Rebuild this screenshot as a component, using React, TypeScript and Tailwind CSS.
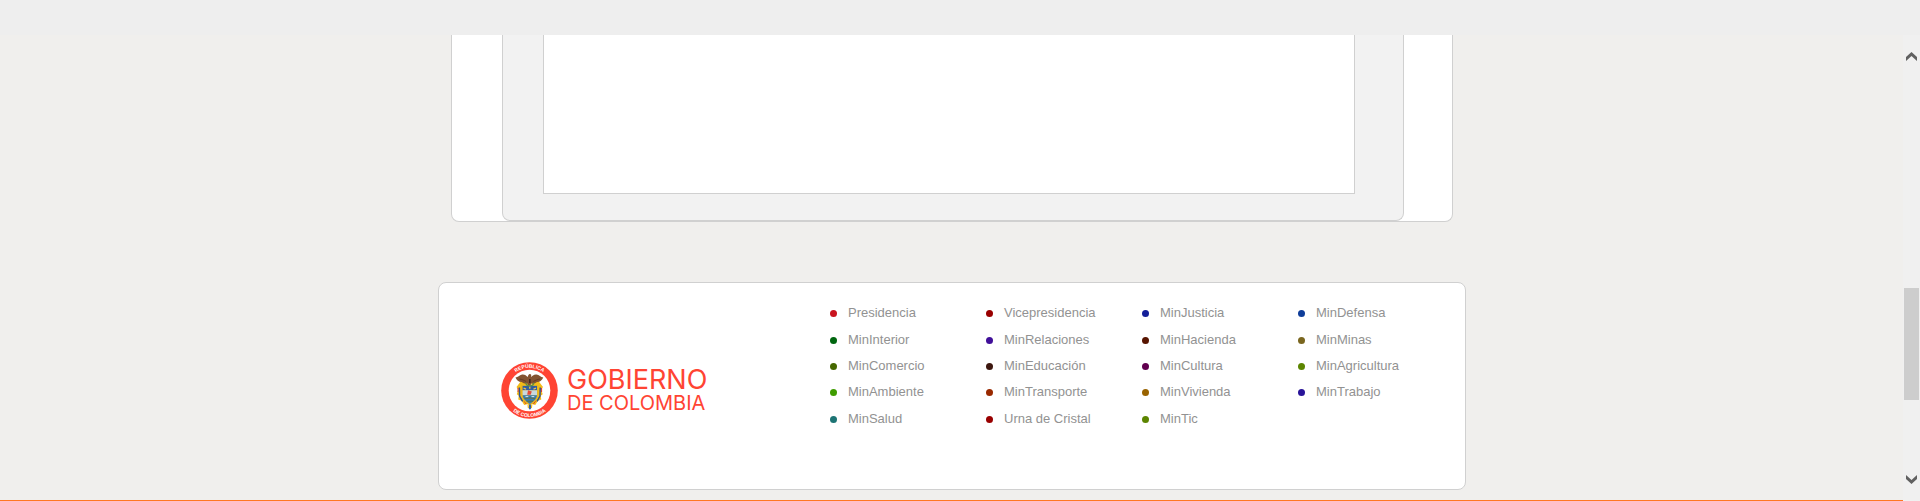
const columns = [
  [
    { name: "Presidencia", dot: "bg-[#c9141e]" },
    { name: "MinInterior", dot: "bg-[#00660f]" },
    { name: "MinComercio", dot: "bg-[#456700]" },
    { name: "MinAmbiente", dot: "bg-[#3f9c00]" },
    { name: "MinSalud", dot: "bg-[#1d7474]" },
  ],
  [
    { name: "Vicepresidencia", dot: "bg-[#990000]" },
    { name: "MinRelaciones", dot: "bg-[#400f99]" },
    { name: "MinEducación", dot: "bg-[#3d170f]" },
    { name: "MinTransporte", dot: "bg-[#992900]" },
    { name: "Urna de Cristal", dot: "bg-[#990000]" },
  ],
  [
    { name: "MinJusticia", dot: "bg-[#141f99]" },
    { name: "MinHacienda", dot: "bg-[#571400]" },
    { name: "MinCultura", dot: "bg-[#61004f]" },
    { name: "MinVivienda", dot: "bg-[#996300]" },
    { name: "MinTic", dot: "bg-[#5c8500]" },
  ],
  [
    { name: "MinDefensa", dot: "bg-[#0f3d99]" },
    { name: "MinMinas", dot: "bg-[#7a661f]" },
    { name: "MinAgricultura", dot: "bg-[#5c8500]" },
    { name: "MinTrabajo", dot: "bg-[#291499]" },
  ],
];

function Emblem() {
  return (
    <svg viewBox="0 0 57 57" className="size-[57px] shrink-0" aria-hidden="true">
      <defs>
        <path id="arc-top" d="M5.8 28.5a22.7 22.7 0 0 1 45.4 0" />
        <path id="arc-bottom" d="M2 28.5a26.5 26.5 0 0 0 53 0" />
      </defs>
      <circle cx="28.5" cy="28.5" r="28.3" fill="#ff4433" />
      <circle cx="28.5" cy="28.5" r="20.8" fill="#fff" />
      <g fill="#fff" fontFamily="'Liberation Sans', sans-serif" fontWeight="700" fontSize="5" textAnchor="middle">
        <text><textPath href="#arc-top" startOffset="50%">REPÚBLICA</textPath></text>
        <text><textPath href="#arc-bottom" startOffset="50%">DE COLOMBIA</textPath></text>
      </g>
      {/* Flags at both sides of the shield */}
      <path d="M20 19l-4.5 6 1.8 2.6-1.5 4.6 2 1.6-.6 3.8 3.4 1.2 2.6 4.2 4-1V19z" fill="#f3bb18" />
      <path d="M37.5 19l4.5 6-1.8 2.6 1.5 4.6-2 1.6.6 3.8-3.4 1.2-2.6 4.2-4-1V19z" fill="#f3bb18" />
      <path d="M18.4 25.5l.2 8.5 3 5.4M39.2 25.5l-.2 8.5-3 5.4" fill="none" stroke="#31538f" strokeWidth="1.5" />
      <path d="M17 26v4M40.6 26v4M23 39l2.2 3M34.6 39l-2.2 3" fill="none" stroke="#d8362c" strokeWidth="1" />
      {/* Shield */}
      <path d="M20.2 23h17.2v9.2c0 5.2-3.8 8.4-8.6 11.4-4.8-3-8.6-6.2-8.6-11.4z" fill="#e8b521" />
      <path d="M21.6 23.9h14.4v4.4H21.6z" fill="#315da0" />
      <path d="M21.6 28.3h14.4v5H21.6z" fill="#c9d8dc" />
      <path d="M21.6 33.3h14.4c-.3 3.6-3.5 6.2-7.2 8.6-3.7-2.4-6.9-5-7.2-8.6z" fill="#397cae" />
      <path d="M27 28.2l3.8 1.2-1.2 3.4h-3.4z" fill="#e34a38" />
      <path d="M22.6 26.2l2.5 1M35 26.2l-2.5 1M28.8 24.4v2.4" stroke="#efc347" strokeWidth="1.3" />
      <path d="M23.5 36.8l5.3-1 5.3 1M25.5 39.3h6.6" fill="none" stroke="#65713d" strokeWidth="1.1" />
      <path d="M24.5 34.6h2.8M30.5 34.6h2.8" stroke="#fff" strokeWidth=".8" />
      <path d="M28 42.5h1.8l.6 3.6-1.5 1.6-1.4-1.6z" fill="#315da0" />
      <path d="M27 42.8l.4 3.2M30.8 42.8l-.4 3.2" stroke="#f3bb18" strokeWidth="1.1" />
      {/* Condor with open wings and laurel */}
      <path d="M26.5 21.6c-2.4.4-4.3-.3-5.7-1.5-3 .2-5.2-1.8-6.3-4.6 2.6 0 3.6-2.3 6.6-2.9 2.5-.4 4.3 1.2 5.7 2.5.3-1.6.8-3 2.1-3 1 0 1.6.8 1.3 1.9l-.3 1.3c1.3-1.3 3-3 5.6-2.7 2.8.4 4 2.9 6.8 2.9-1.2 2.8-3.5 4.8-6.4 4.6-1.5 1.2-3.4 1.9-5.8 1.5l-.5 1.8h-2.6z" fill="#835331" />
      <path d="M18.5 17c2.5.4 4.3 1.1 6.6 2.5M39 17c-2.5.4-4.3 1.1-6.6 2.5" fill="none" stroke="#5c3523" strokeWidth=".8" />
      <path d="M24.8 20.8c0 2 1.7 3 4 3s4-1 4-3" fill="none" stroke="#599047" strokeWidth="1.2" />
      <path d="M28 17h1.6v4H28z" fill="#42291f" />
    </svg>
  );
}

function Arrow({ down = false }: { down?: boolean }) {
  return (
    <svg viewBox="0 0 11 9" className="h-[9px] w-[11px]" aria-hidden="true">
      <path
        d={down ? "M0 0l5.5 5L11 0v4L5.5 9 0 4z" : "M0 9l5.5-5L11 9V5L5.5 0 0 5z"}
        fill="#606060"
      />
    </svg>
  );
}

export default function App() {
  return (
    <div className="flex min-h-screen flex-col bg-[#f0efed] font-['Liberation_Sans',Arial,sans-serif]">
      <header className="h-[35px] bg-[#eeeeee]" />
      <div className="flex grow">
        <main className="flex min-w-0 grow flex-col">
          <div className="flex grow flex-col items-center pb-[10px] pl-px">
            <section className="flex w-full max-w-[1002px] flex-col rounded-b-lg border border-t-0 border-[#d0d0d0] bg-white pl-[50px] pr-12">
              <div className="rounded-b-lg border border-t-0 border-[#d0d0d0] bg-[#f2f2f2] pb-[26px] pl-10 pr-12">
                <div className="h-[159px] border border-t-0 border-[#d0d0d0] bg-white" />
              </div>
            </section>
            <footer className="mt-[60px] flex w-full max-w-[1028px] grow items-start rounded-lg border border-[#d0d0d0] bg-white pb-14 pt-[17px]">
              <a href="#gobierno" className="flex w-[391px] shrink-0 items-center gap-[9px] pl-[62px] pt-[62px]">
                <Emblem />
                <span className="flex flex-col font-[Inter,sans-serif] text-[#ff4433]">
                  <span className="text-[27px] leading-6">GOBIERNO</span>
                  <span className="text-[20px] leading-[22px]">DE COLOMBIA</span>
                </span>
              </a>
              <nav className="grid grow grid-cols-[repeat(4,156px)]" aria-label="Entidades">
                {columns.map((items) => (
                  <ul key={items[0].name} className="grid h-[132px] grid-rows-5 text-[13px] leading-4 text-[#929292]">
                    {items.map((item) => (
                      <li key={item.name} className="flex items-center">
                        <a href={"#" + item.name} className="flex items-center gap-[11px]">
                          <span className={"mt-px size-[7px] rounded-full " + item.dot} />
                          {item.name}
                        </a>
                      </li>
                    ))}
                  </ul>
                ))}
              </nav>
            </footer>
          </div>
          <div className="h-px bg-[#ff7722]" />
        </main>
        <aside className="flex w-[17px] shrink-0 flex-col items-center bg-[#f0f0f0] pb-[17px] pt-[17px]">
          <button type="button" aria-label="Subir" className="block"><Arrow /></button>
          <div className="mt-[227px] h-[112px] w-[15px] bg-[#cdcdcd]" />
          <button type="button" aria-label="Bajar" className="mt-auto block"><Arrow down /></button>
        </aside>
      </div>
    </div>
  );
}
